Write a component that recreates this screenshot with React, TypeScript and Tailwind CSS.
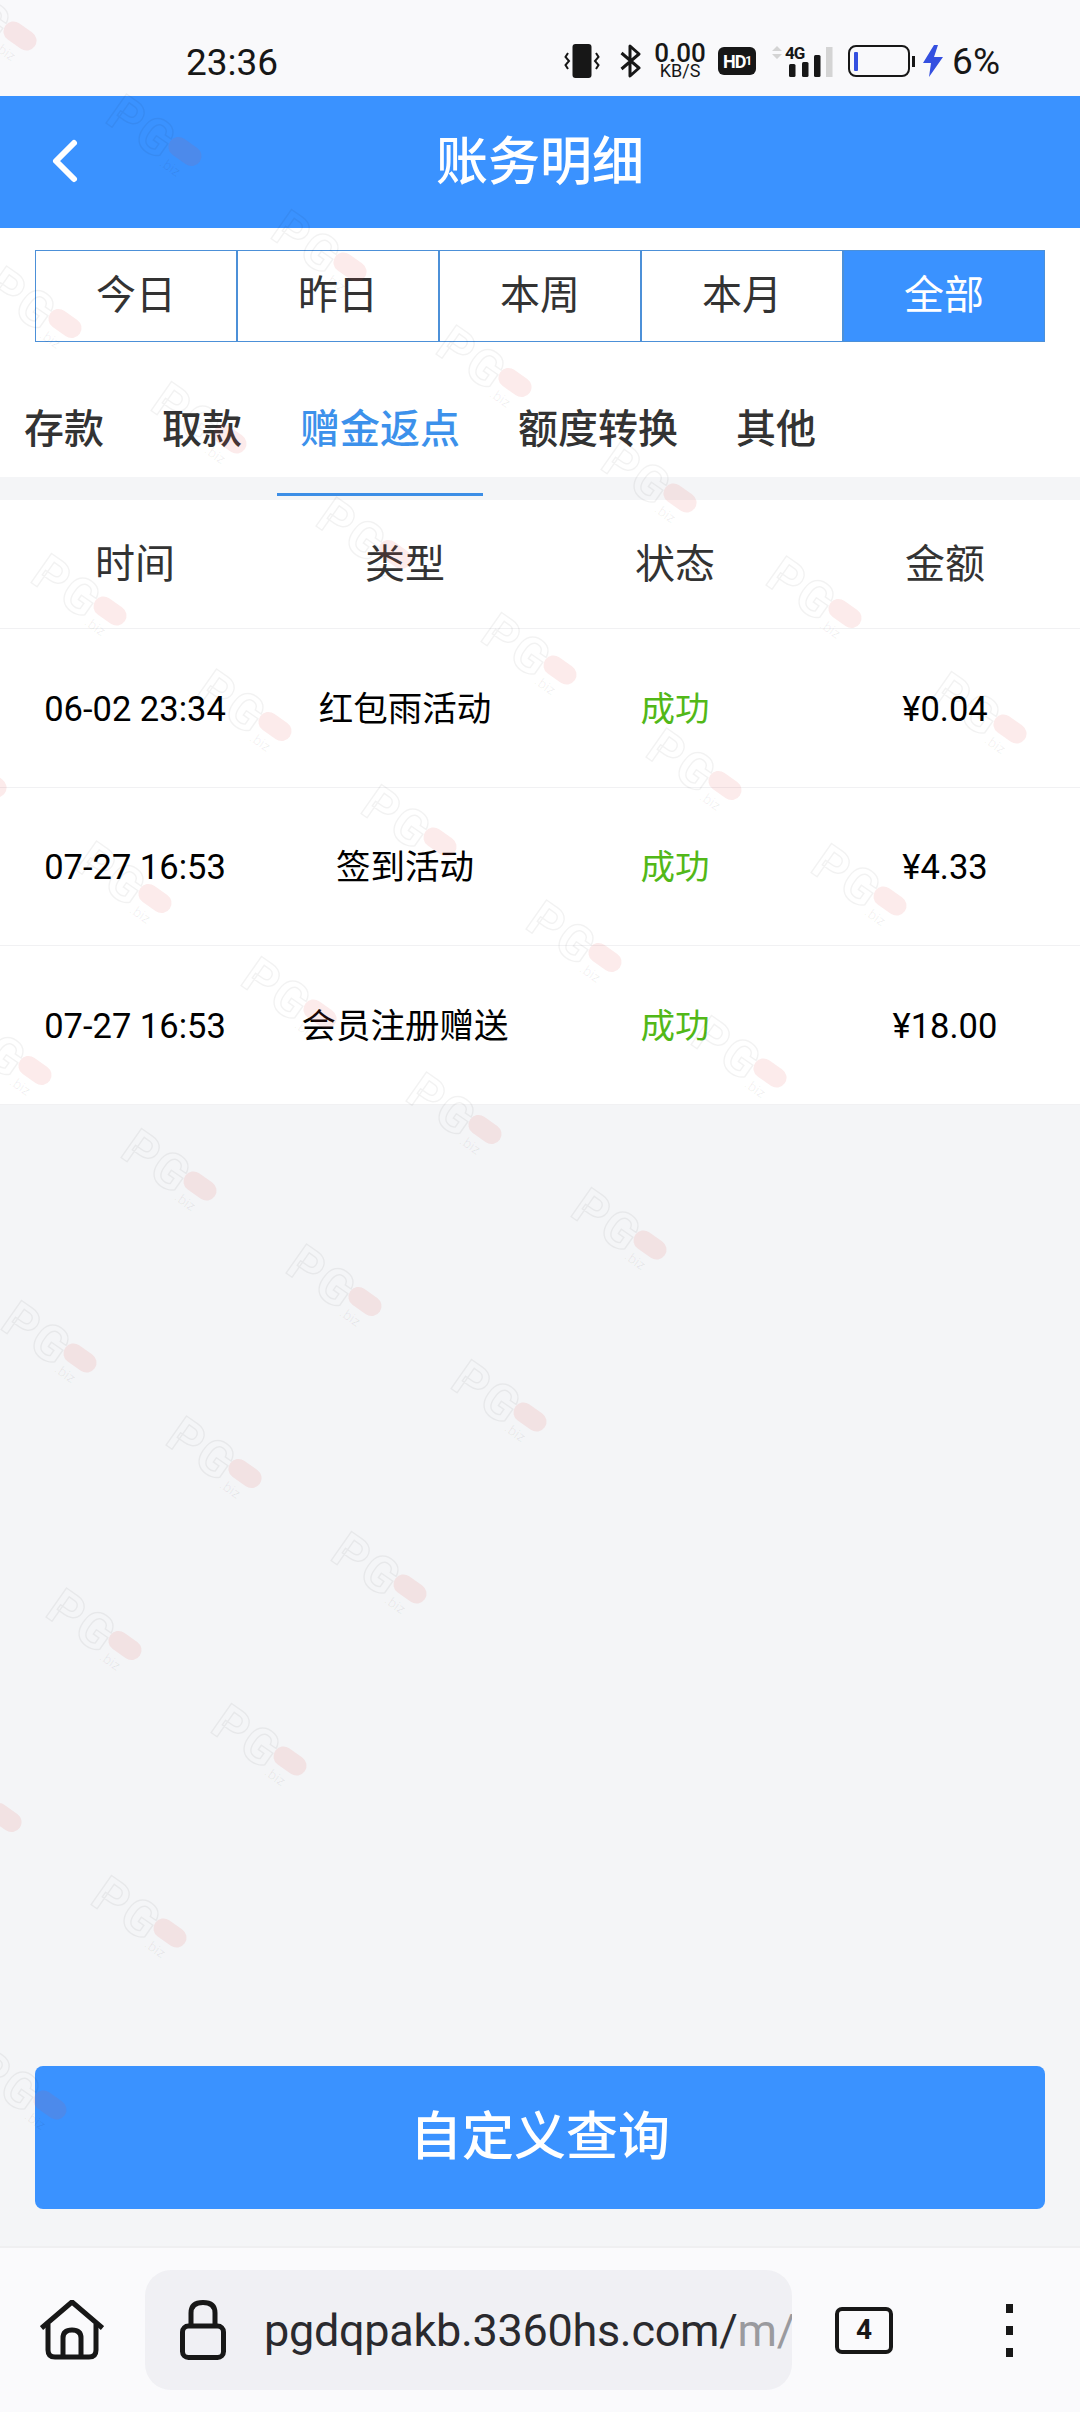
import { ChevronLeft } from 'lucide-react'

const ranges = ['今日', '昨日', '本周', '本月', '全部']

const rows = [
  { time: '06-02 23:34', type: '红包雨活动', status: '成功', amount: '¥0.04' },
  { time: '07-27 16:53', type: '签到活动', status: '成功', amount: '¥4.33' },
  { time: '07-27 16:53', type: '会员注册赠送', status: '成功', amount: '¥18.00' },
]

// Watermark lattice, measured from the pink pills in the screenshot
const marks: { x: number; y: number }[] = []
for (let i = -4; i <= 2; i++) {
  for (let j = -4; j <= 4; j++) {
    const x = 200 + i * 165 + j * 120
    const y = 1186 + i * 115.5 - j * 172
    if (x > -60 && x < 1160 && y > -20 && y < 2260) marks.push({ x, y })
  }
}

function Watermarks() {
  return (
    <svg className="absolute top-0 left-0 w-[1080px] h-[2246px] pointer-events-none" viewBox="0 0 1080 2246">
      {marks.map((m) => (
        <g key={`${m.x}-${m.y}`} transform={`translate(${m.x} ${m.y}) rotate(35)`}>
          <text x="-84" y="22" fontSize="50" fontWeight="700" letterSpacing="2" fill="none" stroke="#000" strokeOpacity="0.05" strokeWidth="1.5">
            PG
          </text>
          <text x="-14" y="26" fontSize="14" fill="#000" fillOpacity="0.06">
            .biz
          </text>
          <rect x="-18" y="-10" width="36" height="20" rx="10" fill="#e5484d" fillOpacity="0.11" />
        </g>
      ))}
    </svg>
  )
}

function StatusBar() {
  return (
    <div className="h-[96px] bg-[#f9f9fb] flex items-center text-[#171717]">
      <span className="ml-[186px] text-[37px] leading-none mt-[28px]">23:36</span>

      <div className="ml-auto flex items-center h-[40px] mt-[26px]">
        {/* vibrate */}
        <svg width="36" height="36" viewBox="0 0 36 36" className="mr-[20px]">
          <rect x="8.5" y="1" width="19" height="34" rx="3" fill="#171717" />
          <path d="M4 10 L1.5 14 L5 18 L1.5 22 L4 26 M32 10 L34.5 14 L31 18 L34.5 22 L32 26" fill="none" stroke="#171717" strokeWidth="2" />
        </svg>
        {/* bluetooth */}
        <svg width="22" height="34" viewBox="0 0 22 34" className="mr-[11px]">
          <path d="M1.5 9 L19 24 L10 32 V2 L19 10 L1.5 25" fill="none" stroke="#171717" strokeWidth="3" strokeLinejoin="round" />
        </svg>
        {/* speed */}
        <div className="w-[54px] mr-[11px] flex flex-col items-center text-center">
          <span className="text-[26px] leading-[19px] font-medium">0.00</span>
          <span className="text-[18px] leading-[15px]">KB/S</span>
        </div>
        {/* HD */}
        <div className="w-[38px] h-[28px] rounded-[6px] bg-[#171717] text-white flex items-center justify-center text-[18px] font-bold tracking-[-1px] mr-[15px]">
          HD<span className="text-[12px]">1</span>
        </div>
        {/* signal */}
        <svg width="62" height="34" viewBox="0 0 62 34" className="mr-[15px]">
          <path d="M1 7 L6 2 L11 7 Z M1 10 L6 15 L11 10 Z" fill="#d4d4d4" />
          <text x="14" y="15" fontSize="17" fontWeight="700" fill="#171717" letterSpacing="-1">
            4G
          </text>
          <rect x="18" y="20" width="6.5" height="13" rx="1.5" fill="#171717" />
          <rect x="31" y="18" width="6.5" height="15" rx="1.5" fill="#171717" />
          <rect x="43" y="11" width="6.5" height="22" rx="1.5" fill="#171717" />
          <rect x="55" y="3" width="6.5" height="30" fill="#d4d4d4" />
        </svg>
        {/* battery */}
        <svg width="68" height="32" viewBox="0 0 68 32" className="mr-[7px]">
          <rect x="1" y="1" width="60" height="30" rx="7" fill="none" stroke="#171717" strokeWidth="2" />
          <rect x="6" y="7" width="4" height="19" rx="1" fill="#3550e0" />
          <rect x="64" y="11" width="3" height="11" fill="#171717" />
        </svg>
        {/* charging bolt */}
        <svg width="20" height="32" viewBox="0 0 20 32" className="mr-[9px]">
          <path d="M11 0 L0 18 H8 L6 32 L20 12 H11 L15 0 Z" fill="#3550e0" />
        </svg>
        <span className="text-[37px] leading-none mr-[80px]">6%</span>
      </div>
    </div>
  )
}

function BrowserBar() {
  return (
    <div className="h-[166px] bg-[#fafafc] border-t-[2px] border-[#efeff1] flex items-center">
      {/* home */}
      <svg width="64" height="60" viewBox="0 0 64 60" className="ml-[40px] mr-[41px] shrink-0">
        <path d="M1.5 28 L32 2 L62.5 28" fill="none" stroke="#171717" strokeWidth="5" strokeLinejoin="round" />
        <path d="M8 24 V50 Q8 57 15 57 H49 Q56 57 56 50 V24" fill="none" stroke="#171717" strokeWidth="5" />
        <path d="M23 57 V38 Q23 30 32 30 Q41 30 41 38 V57" fill="none" stroke="#171717" strokeWidth="5" />
      </svg>
      <div className="w-[647px] h-[120px] rounded-[26px] bg-[#f0f0f4] flex items-center overflow-hidden pl-[35px]">
        {/* lock */}
        <svg width="46" height="60" viewBox="0 0 46 60" className="shrink-0 mr-[38px]">
          <rect x="2.5" y="26" width="41" height="31.5" rx="6" fill="none" stroke="#171717" strokeWidth="5" />
          <path d="M11 26 V13 Q11 2.5 23 2.5 Q35 2.5 35 13 V26" fill="none" stroke="#171717" strokeWidth="5" />
        </svg>
        <span className="text-[45px] tracking-[-0.3px] leading-none text-[#2a2a2e] whitespace-nowrap">
          pgdqpakb.3360hs.com/<span className="text-[#9a9a9e]">m/</span>
        </span>
      </div>
      {/* tab count */}
      <div className="ml-[43px] w-[58px] h-[47px] rounded-[7px] border-[4px] border-[#171717] flex items-center justify-center text-[28px] font-bold text-[#171717] leading-none">
        4
      </div>
      {/* overflow menu */}
      <div className="ml-[113px] flex flex-col gap-[13px]">
        <span className="w-[7px] h-[9px] bg-[#171717]" />
        <span className="w-[7px] h-[9px] bg-[#171717]" />
        <span className="w-[7px] h-[9px] bg-[#171717]" />
      </div>
    </div>
  )
}

export default function App() {
  return (
    <div className="relative w-[1080px] h-[2412px] overflow-hidden flex flex-col bg-[#f4f5f7] font-['Roboto','Noto_Sans_CJK_SC',sans-serif]">
      <StatusBar />

      {/* Header */}
      <header className="relative h-[132px] bg-[#3a92ff] flex items-center justify-center shrink-0">
        <ChevronLeft size={72} strokeWidth={2} className="absolute left-[29px] top-[29px] text-white" />
        <h1 className="text-[52px] font-medium text-white pt-[2px]">账务明细</h1>
      </header>

      {/* Date range */}
      <div className="bg-white h-[114px] px-[35px] pt-[22px] shrink-0">
        <div className="grid grid-cols-[202px_202px_202px_202px_1fr] h-[92px] border border-[#4c90d8]">
          {ranges.map((r, i) => (
            <div
              key={r}
              className={`flex items-center justify-center text-[40px] ${
                i === 4 ? 'bg-[#3a92ff] text-white' : 'text-[#333] border-r-[2px] border-[#4c90d8]'
              }`}
            >
              {r}
            </div>
          ))}
        </div>
      </div>

      {/* Type tabs */}
      <div className="h-[158px] shrink-0">
        <div className="bg-white h-[135px] flex gap-3 pl-px">
          <div className="px-[23px] pt-[58px] text-[40px] font-medium text-[#333] whitespace-nowrap">存款</div>
          <div className="px-[23px] pt-[58px] text-[40px] font-medium text-[#333] whitespace-nowrap">取款</div>
          <div className="relative px-[23px] pt-[58px] text-[40px] font-medium text-[#3c91eb] whitespace-nowrap">
            赠金返点
            <span className="absolute left-0 right-0 top-[151px] h-[3px] bg-[#3c8ee6]" />
          </div>
          <div className="px-[23px] pt-[58px] text-[40px] font-medium text-[#333] whitespace-nowrap">额度转换</div>
          <div className="px-[23px] pt-[58px] text-[40px] font-medium text-[#333] whitespace-nowrap">其他</div>
        </div>
      </div>

      {/* Table */}
      <div className="bg-white shrink-0">
        <div className="grid grid-cols-4 h-[129px] pt-[2px] items-center text-center text-[40px] text-[#333] border-b border-[#f1f1f3]">
          <span>时间</span>
          <span>类型</span>
          <span>状态</span>
          <span>金额</span>
        </div>
        {rows.map((row) => (
          <div key={row.type} className="grid grid-cols-4 h-[158.5px] pt-[4px] items-center text-center text-[34.5px] text-black border-b border-[#f1f1f3]">
            <span>{row.time}</span>
            <span>{row.type}</span>
            <span className="text-[#52b818]">{row.status}</span>
            <span>{row.amount}</span>
          </div>
        ))}
      </div>

      <div className="flex-1" />

      <div className="px-[35px] pb-[37px] shrink-0">
        <button className="w-full h-[143px] rounded-[8px] bg-[#3a92ff] text-white text-[52px] font-medium">自定义查询</button>
      </div>

      <BrowserBar />
      <Watermarks />
    </div>
  )
}
